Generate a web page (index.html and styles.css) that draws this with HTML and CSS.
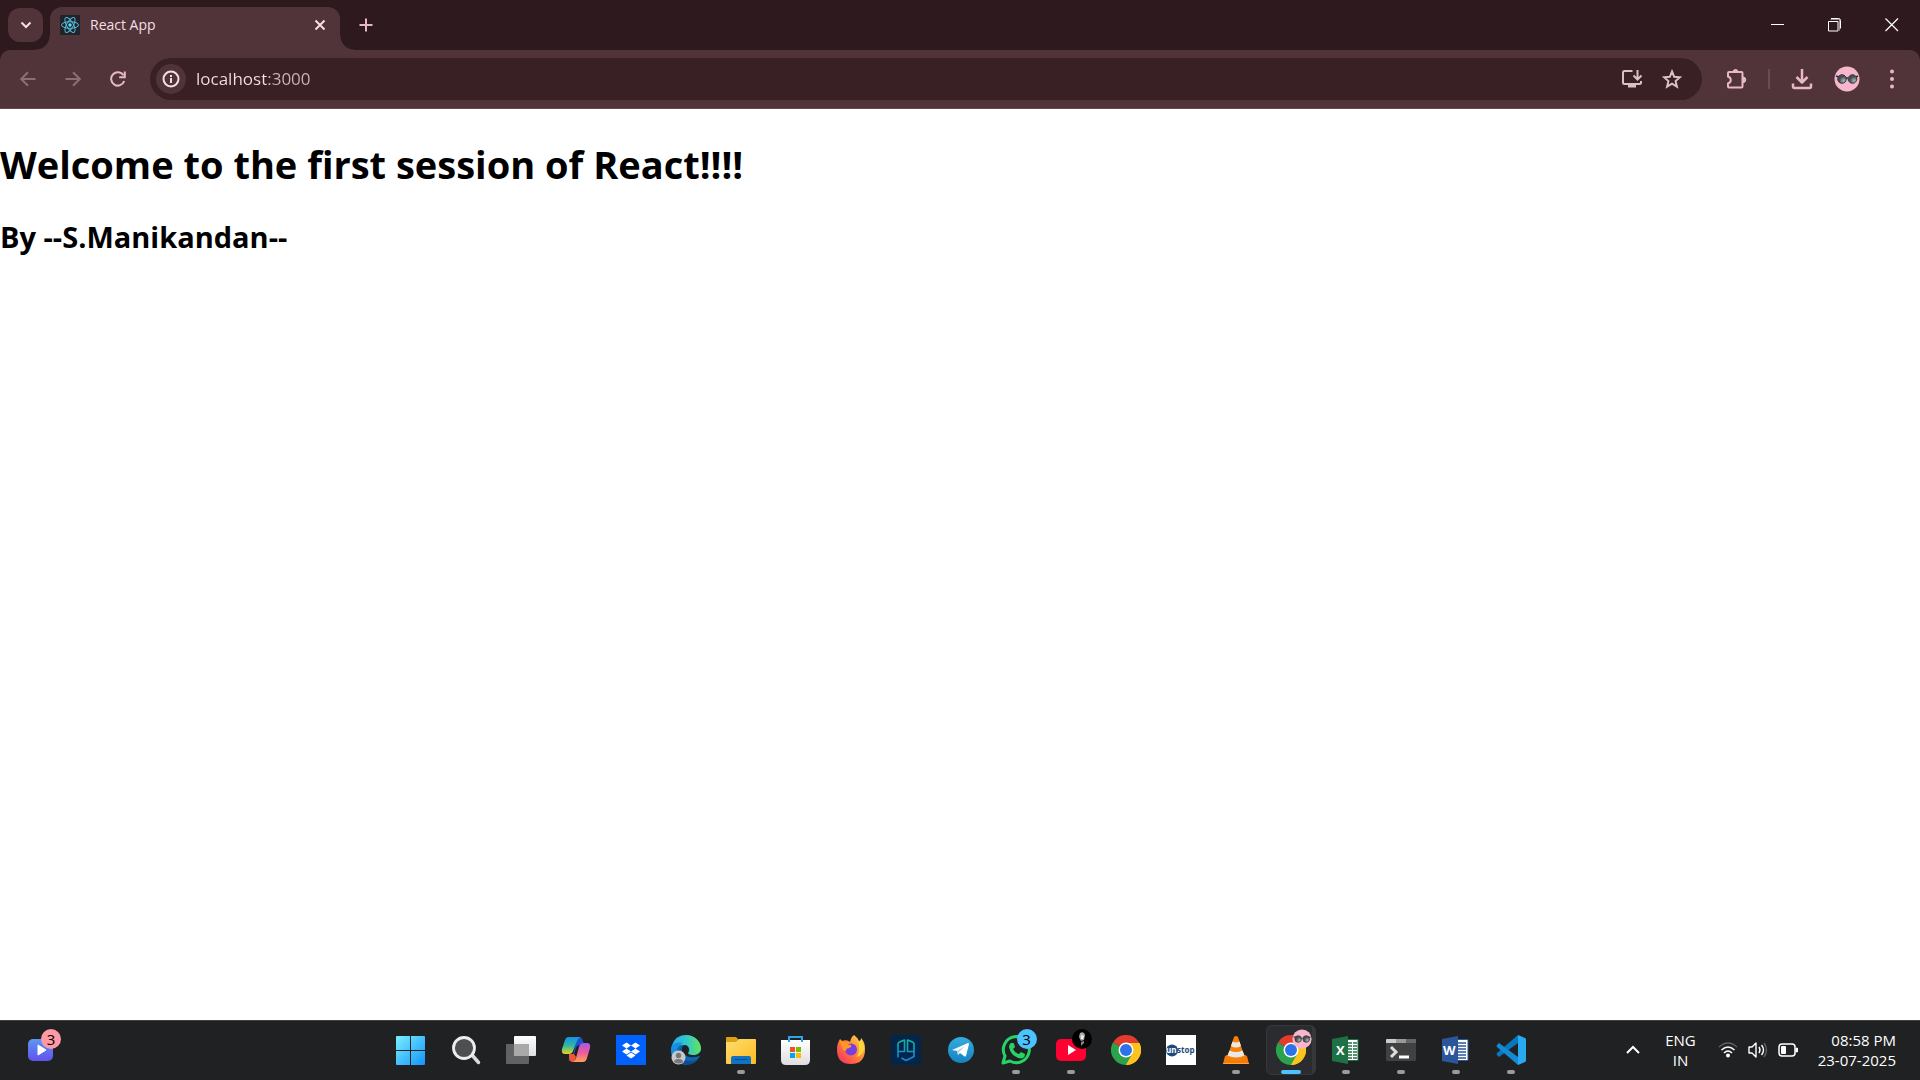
FILE: index.html
```html
<!DOCTYPE html>
<html lang="en">
<head>
<meta charset="utf-8">
<title>React App</title>
<link rel="stylesheet" href="styles.css">
</head>
<body>
<div class="screen">
  <header class="browser">
    <div class="tabstrip">
      <button class="tab-search" aria-label="Search tabs"><svg width="14" height="14" viewBox="0 0 14 14"><path d="M2.500 4.500l4.500 4.500 4.500-4.500" class="line w2"/></svg></button>
      <div class="tab">
        <svg class="favicon" width="20" height="20" viewBox="0 0 20 20"><rect width="20" height="20" rx="1" fill="#20232a"/><g fill="none" stroke="#53bcd8" stroke-width="1"><ellipse cx="10" cy="10" rx="8.500" ry="3.300"/><ellipse cx="10" cy="10" rx="8.500" ry="3.300" transform="rotate(60 10 10)"/><ellipse cx="10" cy="10" rx="8.500" ry="3.300" transform="rotate(120 10 10)"/></g><circle cx="10" cy="10" r="1.700" fill="#61dafb"/></svg>
        <span class="tab-title">React App</span>
        <button class="tab-close" aria-label="Close tab"><svg width="12" height="12" viewBox="0 0 12 12"><path d="M1.500 1.500l9 9m0-9l-9 9" class="line w2"/></svg></button>
      </div>
      <button class="new-tab" aria-label="New tab"><svg width="14" height="14" viewBox="0 0 14 14"><path d="M7 .5v13M.5 7h13" class="line w2"/></svg></button>
      <div class="window-controls">
        <button aria-label="Minimize"><svg width="14" height="14" viewBox="0 0 14 14"><path d="M0 6.500h13" stroke="#fff"/></svg></button>
        <button aria-label="Restore"><svg width="14" height="14" viewBox="0 0 14 14" fill="none"><path d="M2.500 1.500h9v11" stroke="#a08d91"/><path d="M3 .5h7.500q2 0 2 2v8M.5 3.500h9.500v9.500h-9.500z" stroke="#fff"/></svg></button>
        <button aria-label="Close"><svg width="14" height="14" viewBox="0 0 14 14"><path d="M.5 .5l12.500 12.500m0-12.500l-12.500 12.500" stroke="#fff" stroke-width="1.200"/></svg></button>
      </div>
    </div>
    <div class="toolbar">
      <div class="nav">
        <button class="dim" aria-label="Back"><svg width="16" height="16" viewBox="0 0 16 16"><path d="M15.500 8H1.500M8 1.200L1.200 8 8 14.800" class="line w2"/></svg></button>
        <button class="dim" aria-label="Forward"><svg width="16" height="16" viewBox="0 0 16 16"><path d="M.5 8h14M8 1.200L14.800 8 8 14.800" class="line w2"/></svg></button>
        <button aria-label="Reload"><svg width="16" height="16" viewBox="0 0 16 16"><path d="M14.200 10A6.700 6.700 0 1 1 13.500 4.300M14.800 .5v5.700H9.200" class="line w2"/></svg></button>
      </div>
      <div class="omnibox">
        <button class="site-info" aria-label="View site information"><svg width="18" height="18" viewBox="0 0 18 18"><circle cx="9" cy="9" r="7.500" class="line w2"/><path d="M9 8v5M9 5v2" class="line w2"/></svg></button>
        <input class="address" type="text" aria-label="Address" value="localhost:3000">
        <button aria-label="Install app"><svg width="22" height="20" viewBox="0 0 22 20"><path d="M11.500 2H3.500Q2 2 2 3.500v10Q2 15 3.500 15h15q1.500 0 1.500-1.500V12M16.500 1v9M12.500 6.500l4 4 4-4" class="line w2"/><path d="M7 15h8v3.500H7z" fill="currentColor"/></svg></button>
        <button aria-label="Bookmark this tab"><svg width="20" height="20" viewBox="0 0 20 20"><path d="M10 2.500l2.200 5.300 5.700.5-4.300 3.800 1.300 5.500-4.900-2.900-4.900 2.900 1.300-5.500-4.300-3.800 5.700-.5z" class="line w2"/></svg></button>
      </div>
      <div class="actions">
        <button aria-label="Extensions"><svg width="22" height="22" viewBox="0 0 22 22"><path d="M4 4h12.500q1 0 1 1v13.500q0 1-1 1H4q-1 0-1-1v-3q2.800-1 2.800-3.500T3 8.500V5q0-1 1-1z" class="line w2"/><path d="M8 4a2.500 2.500 0 0 1 5 0zM18 9a2.800 2.800 0 0 1 0 5.600z" fill="currentColor" stroke="currentColor"/></svg></button>
        <span class="divider"></span>
        <button aria-label="Downloads"><svg width="22" height="22" viewBox="0 0 22 22"><path d="M11 1v13M5.500 9l5.500 5.500L16.500 9M2 15.500v3Q2 20 3.500 20h15q1.500 0 1.500-1.500v-3" class="line w25"/></svg></button>
        <button aria-label="Profile"><svg width="26" height="26" viewBox="0 0 26 26"><use href="#avatar"/></svg></button>
        <button aria-label="Menu"><svg width="6" height="20" viewBox="0 0 6 20" fill="currentColor"><circle cx="3" cy="2.500" r="2"/><circle cx="3" cy="10" r="2"/><circle cx="3" cy="17.500" r="2"/></svg></button>
      </div>
    </div>
  </header>

  <main class="page">
    <h1>Welcome to the first session of React!!!!</h1>
    <h2>By --S.Manikandan--</h2>
  </main>

  <footer class="taskbar">
    <div class="widgets">
      <button class="app" aria-label="Widgets"><svg width="26" height="24" viewBox="0 0 26 24"><rect width="25" height="22" y="1" rx="5" fill="url(#g-widget)"/><path d="M10 7v10l8-5z" fill="#fff" stroke="#fff" stroke-linejoin="round"/></svg><span class="badge pink">3</span></button>
    </div>
    <nav class="apps" aria-label="Pinned apps">
      <button class="app" aria-label="Start"><svg width="30" height="30" viewBox="0 0 30 30" fill="url(#g-start)"><path d="M1 1h13v14H0V2q0-1 1-1zM15 1h13q1 0 1 1v13H15zM0 16h14v14H1q-1 0-1-1zM15 16h14v13q0 1-1 1H15z"/></svg></button>
      <button class="app" aria-label="Search"><svg width="30" height="30" viewBox="0 0 30 30"><path d="M21 20l6.500 7.500" stroke="#d8dcde" stroke-width="3.500" stroke-linecap="round"/><circle cx="13" cy="13" r="10.500" fill="#4d4f50" stroke="#eceff0" stroke-width="2.800"/></svg></button>
      <button class="app" aria-label="Task view"><svg width="30" height="30" viewBox="0 0 30 30"><rect x="0" y="9" width="23" height="20" rx="1" fill="#626262"/><rect x="8" y="1" width="22" height="20" rx="1" fill="url(#g-white)"/><path d="M8 9h15v12H8z" fill="#a9a9a9"/></svg></button>
      <button class="app" aria-label="Copilot"><svg width="30" height="30" viewBox="0 0 30 30"><path d="M17 2q4 0 5 4l1 4h-4q-3 0-4 3l-3 9q-1 4-5 4 4-3 6-10l2-9q1-5 2-5z" fill="#1a52d0"/><path d="M7 2h13q-3 1-4 4l-4 10q-1 3-4 3H4q-4 0-3-5L4 5q1-3 3-3z" fill="url(#g-cop1)"/><path d="M23 8h3q4 0 3 5l-3 10q-1 4-4 4H10q4-1 5-4l3-11q1-4 5-4z" fill="url(#g-cop2)"/><path d="M8 19h5l2 3q-1 5-4 5-2 0-3-3z" fill="#ef5538"/></svg></button>
      <button class="app" aria-label="Dropbox"><svg width="30" height="30" viewBox="0 0 30 30"><path fill="#0061fe" d="M0 0h30v30H0z"/><path fill="#fff" d="M10.500 7.500l4.500 3-4.500 3-4.500-3zM19.500 7.500l4.500 3-4.500 3-4.500-3zM10.500 13.500l4.500 3-4.500 3-4.500-3zM19.500 13.500l4.500 3-4.500 3-4.500-3zM15 17.500l4.500 3-4.500 3-4.500-3z"/></svg></button>
      <button class="app" aria-label="Edge"><svg width="30" height="30" viewBox="0 0 30 30"><circle cx="15" cy="15" r="15" fill="#0868b4"/><path d="M1 11Q4 0 15 0c9 0 15 7 15 13 0 5-4 7-8 7-3 0-5-1-5-2 3-3 1-8-4-8Q4 9 1 16 0 14 1 11z" fill="url(#g-edge)"/><path d="M1 11q4-5 11-3-7 3-6 12 1 5 5 9Q0 25 0 15q0-2 1-4z" fill="#178ee0"/><path d="M11 12q-5 5 0 11 5 5 14 2-3 4-9 5-8-2-9-9 0-6 4-9z" fill="#114b8e"/><path d="M14 10q-4 1-3 6 2 5 8 6 6 1 11-2v3q0 0 0-7-3 5-8 4-5 0-5-2 2-3 0-6-1-2-3-2z" fill="#202123"/><circle cx="7.500" cy="22.500" r="7" fill="#c8c8c8"/><circle cx="7.500" cy="20.500" r="2.700" fill="#777"/><path d="M3 27q0-3 4.500-3t4.500 3q-4 3-9 0z" fill="#777"/></svg></button>
      <button class="app running" aria-label="File Explorer"><svg width="30" height="30" viewBox="0 0 30 30"><path d="M1 2h9l3 3v5H0V3q0-1 1-1z" fill="#dca012"/><path d="M0 7h10l3-3h16q1 0 1 1v23q0 1-1 1H1q-1 0-1-1z" fill="url(#g-folder)"/><path d="M5 29v-6q0-2 2-2h16q2 0 2 2v6z" fill="#0f72c3"/><path d="M9 24.500h12" stroke="#074e8e" stroke-width="1.200" stroke-linecap="round"/></svg></button>
      <button class="app" aria-label="Microsoft Store"><svg width="30" height="30" viewBox="0 0 30 30"><path d="M0 5h29v20q0 5-5 5H5q-5 0-5-5z" fill="url(#g-white)"/><path d="M8 7V2h13v5" stroke="#2ca7e6" stroke-width="2" fill="none"/><path fill="#f25022" d="M9 12h5v5h-5z"/><path fill="#7fba00" d="M15 12h5v5h-5z"/><path fill="#00a4ef" d="M9 18h5v5h-5z"/><path fill="#ffb900" d="M15 18h5v5h-5z"/></svg></button>
      <button class="app" aria-label="Firefox"><svg width="30" height="30" viewBox="0 0 30 30"><path d="M18 0q4 3 5 6 2 0 2-3 4 4 4 11 0 15-14 15T1 15q0-7 3-11 1 2 2 2 5-2 8 1 1-5 4-7z" fill="url(#g-fox)"/><circle cx="15" cy="14.500" r="6" fill="#793ee0"/><path d="M4 4q2 3 6 4 2 2 5 2 1 2-2 3-3 0-3 3-3 0-4-4-2-3-2-8z" fill="#ff9825"/><path d="M18 1q6 5 5 13 0 5-3 8 9-2 8-11-1-5-3-7 0 3-2 3-2-3-5-6z" fill="#ffd43d"/></svg></button>
      <button class="app" aria-label="Code editor"><svg width="30" height="30" viewBox="0 0 30 30"><path fill="#03254a" d="M0 0h30v30H0z"/><g fill="none" stroke="url(#g-pg)" stroke-width="1.600" stroke-linejoin="round"><path d="M7 22.500V9q0-1 1-1.700L13.500 5v11.500H7"/><path d="M23 16.500h-6.500V5L22 7.300q1 .7 1 1.700v12.500l-8 4-4.500-2.500"/></g></svg></button>
      <button class="app" aria-label="Telegram"><svg width="30" height="30" viewBox="0 0 30 30"><circle cx="15" cy="15" r="13" fill="url(#g-tg)"/><path d="M6 15l16-7q1 0 1 1l-3 12q-.5 1-2 0l-4-3-2 2-1-4z" fill="#fff"/><path d="M11 16l8-5-6 6-1 3z" fill="#a9cfe8"/></svg></button>
      <button class="app running" aria-label="WhatsApp"><svg width="30" height="30" viewBox="0 0 30 30"><path d="M2 28l2-7A13 13 0 1 1 9 26z" fill="none" stroke="#25d366" stroke-width="3" stroke-linejoin="round"/><path d="M10 8h2q1 0 1 1l1 3-2 2q2 4 6 5l2-2 4 2q0 4-4 4.500Q10 22 8 12q0-3 2-4z" fill="#25d366"/></svg><span class="badge blue">3</span></button>
      <button class="app running" aria-label="YouTube"><svg width="30" height="30" viewBox="0 0 30 30"><rect y="4" width="30" height="22" rx="5" fill="#ff0033"/><path d="M12 10v10l8-5z" fill="#fff"/></svg><span class="badge black"><svg width="20" height="20" viewBox="0 0 20 20"><path d="M8 4q4-2 5 2l-1 5-3 1-2-4z" fill="#aaa"/><path d="M9 6l3 1-1 3H9z" fill="#eee"/><path d="M9 13l3-1v2l-3 3z" fill="#888"/></svg></span></button>
      <button class="app" aria-label="Google Chrome"><svg width="30" height="30" viewBox="0 0 30 30"><use href="#chrome"/></svg></button>
      <button class="app" aria-label="Unstop"><svg width="30" height="30" viewBox="0 0 30 30"><path fill="#fff" d="M0 0h30v30H0z"/><circle cx="6" cy="15.500" r="6" fill="#1c4980"/><text x="0" y="18" class="unstop" fill="#fff">un</text><text x="11" y="18" class="unstop" fill="#1c4980">stop</text></svg></button>
      <button class="app running" aria-label="VLC media player"><svg width="30" height="30" viewBox="0 0 30 30"><path d="M6 20h18l2 1 2 8H2l2-8z" fill="#f47b0a"/><path d="M13 2q2-2 4 0l7 21q-9 5-18 0z" fill="#f88205"/><path d="M11.500 6.500q3.500 2 7 0L20 11q-5 3-10 0zM8.500 15.500q6.500 3 13 0l2 5q-8.500 4-17 0z" fill="#e9e9e9"/><path d="M2 28h26v1H2z" fill="#ffa432"/></svg></button>
      <button class="app running active" aria-label="Chrome, React App"><svg width="30" height="30" viewBox="0 0 30 30"><use href="#chrome"/></svg><span class="badge"><svg width="20" height="20" viewBox="0 0 26 26"><use href="#avatar"/></svg></span></button>
      <button class="app running" aria-label="Excel"><svg width="30" height="30" viewBox="0 0 30 30"><path d="M16 4.500h11v21H16z" fill="#fff" stroke="#1e7145"/><path d="M17 8h4m1 0h4M17 11h4m1 0h4M17 14h4m1 0h4M17 17h4m1 0h4M17 20h4m1 0h4M17 23h4m1 0h4" stroke="#1e7145" stroke-width="1.500"/><path d="M1 4l16-3v28L1 26z" fill="#1e7145"/><text x="5" y="20" class="office">X</text></svg></button>
      <button class="app running" aria-label="Terminal"><svg width="30" height="30" viewBox="0 0 30 30"><rect y="4" width="30" height="22" rx="1" fill="#414141"/><path d="M0 5q0-1 1-1h9v4H0z" fill="#ccc"/><path d="M10 4h10v4H10z" fill="#999"/><path d="M20 4h9q1 0 1 1v3H20z" fill="#666"/><path d="M5 12l5 5-5 5" fill="none" stroke="#ddd" stroke-width="3"/><path d="M13 20.500h10v3H13z" fill="#fff"/></svg></button>
      <button class="app running" aria-label="Word"><svg width="30" height="30" viewBox="0 0 30 30"><path d="M16 4.500h11v21H16z" fill="#fff" stroke="#2b579a"/><path d="M17 8h8M17 11h8M17 14h8M17 17h8M17 20h8M17 23h8" stroke="#2b579a" stroke-width="1.300"/><path d="M1 4l16-3v28L1 26z" fill="#2b579a"/><text x="2" y="20" class="office">W</text></svg></button>
      <button class="app running" aria-label="Visual Studio Code"><svg width="30" height="30" viewBox="0 0 30 30"><path d="M22 0v8L3 22l-2-2q-1-1 0-2z" fill="#0878be"/><path d="M1 12q-1-1 0-2l2-2 19 14v8z" fill="#138bd3"/><path d="M22 0l7 3q1 0 1 2v20q0 2-1 2l-7 3z" fill="#29a9f2"/></svg></button>
    </nav>
    <div class="tray">
      <button aria-label="Show hidden icons"><svg width="14" height="10" viewBox="0 0 14 10"><path d="M1 8l6-6 6 6" class="line w2"/></svg></button>
      <button class="lang">ENG<br>IN</button>
      <button class="status" aria-label="Network, volume and battery">
        <svg width="20" height="18" viewBox="0 0 20 18" fill="none"><path d="M1 6q9-8 18 0" stroke="#606162" stroke-width="1.500"/><path d="M3.500 9q6.500-6 13 0M6 12q4-4 8 0" stroke="#fff" stroke-width="1.500"/><circle cx="10" cy="14.500" r="2" fill="#fff"/></svg>
        <svg width="20" height="18" viewBox="0 0 20 18" fill="none"><path d="M1 6h3l4-4v14l-4-4H1z" stroke="#fff" stroke-width="1.400" stroke-linejoin="round"/><path d="M11 6q2 3 0 6M13.500 4q4 5 0 10" stroke="#fff" stroke-width="1.400"/><path d="M16 2q5 7 0 14" stroke="#606162" stroke-width="1.400"/></svg>
        <svg width="20" height="18" viewBox="0 0 20 18"><rect x="1" y="3" width="16" height="12" rx="3" fill="none" stroke="#fff" stroke-width="1.500"/><rect x="3" y="5" width="5" height="8" rx="1" fill="#fff"/><path d="M18 7l2 .500v3l-2 .500z" fill="#fff" stroke="#fff"/></svg>
      </button>
      <button class="clock">08:58 PM<br>23-07-2025</button>
    </div>
  </footer>
</div>

<svg class="defs" aria-hidden="true">
  <defs>
    <linearGradient id="g-widget" x2="0" y2="1"><stop stop-color="#5d96f4"/><stop offset="1" stop-color="#6153ec"/></linearGradient>
    <linearGradient id="g-start" x2="1" y2="1"><stop stop-color="#7beeff"/><stop offset="1" stop-color="#1195fb"/></linearGradient>
    <linearGradient id="g-white" x2="0" y2="1"><stop stop-color="#fff"/><stop offset="1" stop-color="#dedede"/></linearGradient>
    <linearGradient id="g-cop1" x2="0" y2="1"><stop stop-color="#1c8eea"/><stop offset=".5" stop-color="#2cb7a4"/><stop offset="1" stop-color="#e8d51d"/></linearGradient>
    <linearGradient id="g-cop2" x2="0" y2="1"><stop stop-color="#a45bea"/><stop offset=".5" stop-color="#ed5a9b"/><stop offset="1" stop-color="#ffa057"/></linearGradient>
    <linearGradient id="g-edge"><stop stop-color="#29a9ea"/><stop offset=".5" stop-color="#32c7cb"/><stop offset="1" stop-color="#65e459"/></linearGradient>
    <linearGradient id="g-folder" x2="1" y2="1"><stop stop-color="#ffdc70"/><stop offset="1" stop-color="#fcbc20"/></linearGradient>
    <linearGradient id="g-fox" x1="1" x2="0" y2="1"><stop stop-color="#ffe447"/><stop offset=".5" stop-color="#ff8037"/><stop offset="1" stop-color="#f52669"/></linearGradient>
    <linearGradient id="g-pg" x2="0" y2="1"><stop stop-color="#12b7a0"/><stop offset="1" stop-color="#1685d8"/></linearGradient>
    <linearGradient id="g-tg" x2="0" y2="1"><stop stop-color="#35ade0"/><stop offset="1" stop-color="#1581c2"/></linearGradient>
    <radialGradient id="g-lens" cx=".7" cy=".7"><stop stop-color="#a9babb"/><stop offset="1" stop-color="#454c50"/></radialGradient>
    <g id="chrome"><path d="M15 15L2 7.500a15 15 0 0 1 26 0z" fill="#e33b2e"/><path d="M15 15L28 7.500A15 15 0 0 1 15 30z" fill="#fcc31e"/><path d="M2 7.500A15 15 0 0 0 15 30l6.500-11.200L15 15z" fill="#2ba24c"/><path d="M15 8h13.300A15 15 0 0 1 15 30l6.500-11z" fill="#fcc31e"/><circle cx="15" cy="15" r="7.500" fill="#fff"/><circle cx="15" cy="15" r="6" fill="#2c72e8"/></g>
    <g id="avatar"><circle cx="13" cy="13" r="12.500" fill="#f8b6cc"/><circle cx="8" cy="13" r="4.300" fill="url(#g-lens)" stroke="#383d42"/><circle cx="18.500" cy="13" r="4.300" fill="url(#g-lens)" stroke="#383d42"/><path d="M2 10l3 1M24 10l-2 1M12 12h2" stroke="#302f35" stroke-width="1.500"/></g>
  </defs>
</svg>
</body>
</html>
```
FILE: styles.css
```css
* { box-sizing: border-box; }
body {
  margin: 0;
  font-family: "Open Sans", "Noto Sans", sans-serif;
  background: #fff;
  color: #000;
}
button {
  display: flex;
  align-items: center;
  justify-content: center;
  margin: 0;
  padding: 0;
  border: 0;
  background: none;
  color: inherit;
  font: inherit;
}
svg { display: block; flex: none; }
.line { fill: none; stroke: currentColor; }
.w2 { stroke-width: 2; }
.w25 { stroke-width: 2.5; stroke-linejoin: round; }
.defs { position: absolute; width: 0; height: 0; }
.screen { display: flex; flex-direction: column; min-height: 100vh; }

/* Browser frame */
.browser { background: #2e191e; color: #e9b9c3; }
.tabstrip { display: flex; align-items: flex-start; height: 50px; padding-left: 8px; }
.tab-search {
  width: 35px;
  height: 34px;
  margin: 8px 7px 0 0;
  border-radius: 12px;
  background: #50343a;
  color: #f5dfe2;
}
.tab {
  position: relative;
  display: flex;
  align-items: center;
  gap: 10px;
  width: 290px;
  height: 43px;
  margin-top: 7px;
  padding: 0 14px 8px 10px;
  border-radius: 12px 12px 0 0;
  background: #50343a;
  color: #f5dfe2;
}
.tab::before,
.tab::after {
  content: "";
  position: absolute;
  bottom: 0;
  width: 14px;
  height: 14px;
}
.tab::before { right: 100%; background: radial-gradient(circle at 0 0, transparent 13px, #50343a 14px); }
.tab::after { left: 100%; background: radial-gradient(circle at 100% 0, transparent 13px, #50343a 14px); }
.tab-title { flex: 1; font-size: 14px; line-height: 20px; }
.new-tab { width: 34px; height: 34px; margin: 8px 0 0 9px; }
.window-controls { display: flex; margin-left: auto; }
.window-controls button { width: 57px; height: 49px; }
.toolbar {
  display: flex;
  align-items: center;
  height: 59px;
  padding: 0 10px;
  border-bottom: 1px solid #65494f;
  border-radius: 10px 10px 0 0;
  background: #50343a;
}
.nav, .actions { display: flex; align-items: center; gap: 9px; }
.nav button, .actions button { width: 36px; height: 36px; }
.nav .dim { color: #8b6e74; }
.omnibox {
  display: flex;
  flex: 1;
  align-items: center;
  height: 42px;
  margin: 0 16px 0 14px;
  padding: 0 10px 0 6px;
  border-radius: 21px;
  background: #382025;
  color: #dbc1c6;
}
.omnibox button { width: 40px; height: 30px; }
.omnibox .site-info { width: 30px; border-radius: 15px; background: #50343a; color: #f5dfe2; }
/* The port is dimmer than the host name */
.address {
  flex: 1;
  min-width: 0;
  margin-left: 10px;
  padding: 0;
  border: 0;
  outline: 0;
  background: linear-gradient(90deg, #f7e0e3 70px, #cdb6b9 70px);
  background-clip: text;
  color: transparent;
  font-family: inherit;
  font-size: 17px;
  line-height: 24px;
}
.divider { width: 2px; height: 20px; margin: 0 5px; background: #6b4c53; }

/* Page */
.page { flex: 1; }
h1, h2 { font-weight: 700; }
h1 { margin: 28px 0 26px; font-size: 38px; line-height: 54px; }
h2 { margin: 26px 0; font-size: 29px; line-height: 40px; }

/* Taskbar */
.taskbar {
  display: grid;
  grid-template-columns: 1fr auto 1fr;
  height: 60px;
  border-top: 1px solid #424344;
  background: #202123;
  color: #fff;
}
.widgets { padding-left: 13px; }
.apps { display: flex; padding-left: 2px; }
.app { position: relative; width: 55px; height: 58px; }
.running::after {
  content: "";
  position: absolute;
  bottom: 5px;
  left: 23px;
  width: 8px;
  height: 4px;
  border-radius: 2px;
  background: #9b9b9b;
}
.active::before {
  content: "";
  position: absolute;
  inset: 4px 3px 4px 2px;
  border: 1px solid #36373a;
  border-right-width: 4px;
  border-radius: 6px;
  background: #2b2c2f;
}
.active > svg { position: relative; }
.active::after { left: 17px; width: 20px; background: #4cc2ff; }
.badge {
  position: absolute;
  top: 8px;
  right: 7px;
  width: 20px;
  height: 20px;
  border-radius: 10px;
  color: #000;
  font-size: 15px;
  line-height: 20px;
  text-align: center;
}
.pink { background: #ff99a4; }
.blue { background: #4cc2ff; }
.black { background: #000; }
.unstop { font-family: "Open Sans", sans-serif; font-size: 8px; font-weight: 700; }
.office { font-family: "Open Sans", sans-serif; font-size: 13px; font-weight: 700; fill: #fff; }
.tray {
  display: flex;
  align-items: center;
  justify-content: flex-end;
  height: 58px;
  padding-right: 24px;
  font-size: 15px;
  line-height: 20px;
}
.lang { margin: 0 22px 0 25px; }
.status { gap: 10px; }
.clock { margin-left: 20px; text-align: right; }
```
